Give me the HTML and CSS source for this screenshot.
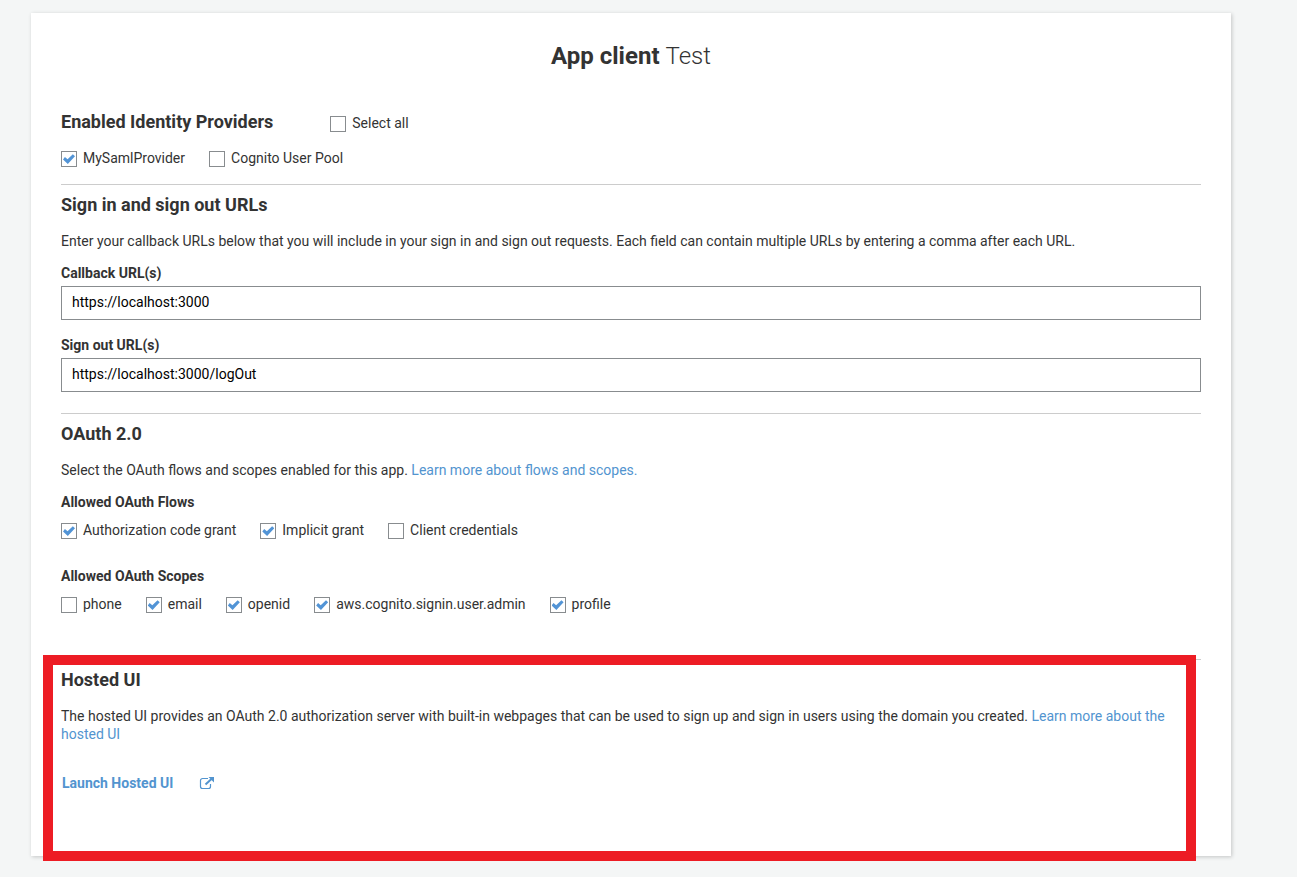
FILE: index.html
```html
<!DOCTYPE html>
<html lang="en">
<head>
<meta charset="utf-8">
<meta name="viewport" content="width=device-width, initial-scale=1">
<title>App client settings</title>
<link rel="stylesheet" href="styles.css">
</head>
<body>
<main class="card">
  <h1 class="title">App client <span class="title-name">Test</span></h1>

  <section class="providers">
    <div class="heading-row">
      <h2 class="heading">Enabled Identity Providers</h2>
      <label class="check"><input type="checkbox">Select all</label>
    </div>
    <div class="checks">
      <label class="check"><input type="checkbox" checked>MySamlProvider</label>
      <label class="check"><input type="checkbox">Cognito User Pool</label>
    </div>
  </section>

  <section class="section urls">
    <h2 class="heading">Sign in and sign out URLs</h2>
    <p class="text">Enter your callback URLs below that you will include in your sign in and sign out requests. Each field can contain multiple URLs by entering a comma after each URL.</p>
    <div class="field">
      <label class="label" for="callback">Callback URL(s)</label>
      <input class="input" id="callback" type="text" value="https://localhost:3000">
    </div>
    <div class="field">
      <label class="label" for="signout">Sign out URL(s)</label>
      <input class="input" id="signout" type="text" value="https://localhost:3000/logOut">
    </div>
  </section>

  <section class="section oauth">
    <h2 class="heading">OAuth 2.0</h2>
    <p class="text">Select the OAuth flows and scopes enabled for this app. <a class="link" href="#">Learn more about flows and scopes.</a></p>
    <fieldset class="group">
      <legend class="label">Allowed OAuth Flows</legend>
      <div class="checks">
        <label class="check"><input type="checkbox" checked>Authorization code grant</label>
        <label class="check"><input type="checkbox" checked>Implicit grant</label>
        <label class="check"><input type="checkbox">Client credentials</label>
      </div>
    </fieldset>
    <fieldset class="group">
      <legend class="label">Allowed OAuth Scopes</legend>
      <div class="checks">
        <label class="check"><input type="checkbox">phone</label>
        <label class="check"><input type="checkbox" checked>email</label>
        <label class="check"><input type="checkbox" checked>openid</label>
        <label class="check"><input type="checkbox" checked>aws.cognito.signin.user.admin</label>
        <label class="check"><input type="checkbox" checked>profile</label>
      </div>
    </fieldset>
  </section>

  <section class="section hosted">
    <h2 class="heading">Hosted UI</h2>
    <p class="text">The hosted UI provides an OAuth 2.0 authorization server with built-in webpages that can be used to sign up and sign in users using the domain you created. <a class="link" href="#">Learn more about the hosted UI</a></p>
    <a class="link launch" href="#">Launch Hosted UI
      <svg class="launch-icon" viewBox="0 0 16 14" aria-hidden="true">
        <path d="M9 2.500H3.500A2 2 0 0 0 1.500 4.500V10.500A2 2 0 0 0 3.500 12.500H9.500A2 2 0 0 0 11.500 10.500V8" fill="none" stroke="currentColor" stroke-width="1.200"/>
        <path d="M6.500 8.500L13 2.500" fill="none" stroke="currentColor" stroke-width="2"/>
        <path d="M9.500 1H15V6.500Z" fill="currentColor"/>
      </svg>
    </a>
    <div class="highlight"></div>
  </section>
</main>
</body>
</html>
```

FILE: styles.css
```css
* {
  box-sizing: border-box;
}

body {
  margin: 0;
  padding: 13px 66px 20px 31px;
  background: #f4f6f6;
  color: #333;
  font: 14px/18px Roboto, "Liberation Sans", sans-serif;
}

.card {
  padding: 28px 30px 0;
  background: #fff;
  box-shadow: 1px 1px 4px rgba(0, 0, 0, 0.2);
}

.title {
  margin: 0 0 41px;
  text-align: center;
  font-size: 24px;
  line-height: 30px;
  font-weight: 700;
}

.title-name {
  font-weight: 300;
}

.heading {
  margin: 0;
  font-size: 18px;
  line-height: 20px;
  font-weight: 700;
}

.heading-row {
  display: flex;
  align-items: flex-end;
  gap: 57px;
  margin-bottom: 17px;
}

.providers {
  padding-bottom: 17px;
}

.section {
  padding-top: 10px;
  border-top: 1px solid #ccc;
}

.text {
  margin: 17px 0 14px;
}

.label {
  display: block;
  padding: 0;
  font-weight: 700;
}

.field + .field {
  margin-top: 16px;
}

.input {
  display: block;
  width: 100%;
  height: 34px;
  margin-top: 4px;
  padding: 0 10px 2px;
  border: 1px solid #888c8f;
  border-radius: 0;
  background: #fff;
  color: #000;
  font: inherit;
}

.urls {
  padding-bottom: 21px;
}

.checks {
  display: flex;
  flex-wrap: wrap;
  gap: 24px;
}

.check {
  display: flex;
  align-items: flex-start;
  gap: 6px;
}

.check input {
  appearance: none;
  display: grid;
  place-items: center;
  width: 16px;
  height: 16px;
  margin: 2px 0 0;
  border: 1px solid #888c8f;
  background: #fff;
}

.check input:checked::before {
  content: "";
  width: 12px;
  height: 10px;
  background: #5294d6;
  clip-path: polygon(0 54%, 16% 30%, 38% 52%, 82% 2%, 100% 22%, 40% 100%);
}

.group {
  min-width: 0;
  margin: 0;
  padding: 0;
  border: 0;
}

.group .checks {
  margin-top: 10px;
}

.group + .group {
  margin-top: 28px;
}

.oauth {
  padding-bottom: 46px;
}

.link {
  color: #5294cf;
  text-decoration: none;
}

.hosted {
  position: relative;
  padding-bottom: 64px;
}

.launch {
  display: inline-flex;
  align-items: center;
  gap: 26px;
  margin-top: 17px;
  padding: 0 1px;
  font-weight: 700;
}

.launch-icon {
  width: 16px;
  height: 14px;
}

.highlight {
  position: absolute;
  inset: -5px 5px -5px -18px;
  border: 10px solid #ed1c24;
  pointer-events: none;
}
```
